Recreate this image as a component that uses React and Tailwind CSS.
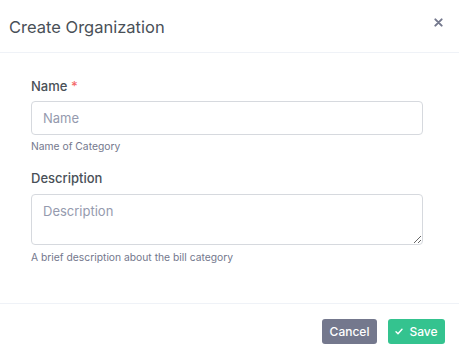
import React from "react";

const CloseIcon = () => (
  <svg width="9" height="9" viewBox="0 0 10 10" fill="none">
    <path d="M1.5 1.5l7 7M8.5 1.5l-7 7" stroke="#74788d" strokeWidth="2.2" strokeLinecap="round" />
  </svg>
);

const CheckIcon = () => (
  <svg width="8" height="7" viewBox="0 0 8 7" fill="none">
    <path d="M1 3.8l2 2L7 1.2" stroke="#ffffff" strokeWidth="1.4" strokeLinecap="round" strokeLinejoin="round" />
  </svg>
);

const App = () => {
  return (
    <div
      className="w-[459px] h-[358px] bg-white flex flex-col overflow-hidden"
      style={{ fontFamily: "Inter, 'Noto Sans', sans-serif" }}
    >
      {/* header */}
      <div className="h-[53px] flex items-center justify-between pl-[9px] pr-[16px] border-b border-[#eff2f7] shrink-0">
        <h5 className="text-[16.5px] text-[#495057] font-normal leading-none mt-[2px]">Create Organization</h5>
        <button className="flex items-center justify-center w-[10px] h-[10px] mt-[-7px]">
          <CloseIcon />
        </button>
      </div>

      {/* body */}
      <div className="h-[250px] pl-[31px] pr-[36px] pt-[23px] shrink-0">
        <label className="block text-[13px] leading-[20px] font-medium text-[#495057] mb-[5px]">
          Name <span className="text-[#f46a6a]">*</span>
        </label>
        <input
          placeholder="Name"
          className="block w-full h-[34px] px-[11px] text-[13px] border border-[#d6d9de] rounded-[4px] placeholder:text-[#959aae] outline-none"
        />
        <p className="text-[10.3px] leading-[16px] text-[#74788d] mt-[3px]">Name of Category</p>

        <label className="block text-[13px] leading-[20px] font-medium text-[#495057] mt-[14px] mb-[6px]">
          Description
        </label>
        <textarea
          placeholder="Description"
          className="block w-full h-[51px] px-[11px] py-[7px] text-[13px] border border-[#d6d9de] rounded-[4px] placeholder:text-[#959aae] outline-none resize-y"
        />
        <p className="text-[10.3px] leading-[16px] text-[#74788d] mt-[4px]">A brief description about the bill category</p>
      </div>

      {/* footer */}
      <div className="flex-1 border-t border-[#eff2f7] flex justify-end items-start gap-[11px] pt-[15px] pr-[14px]">
        <button className="h-[25px] w-[55px] rounded-[3px] bg-[#74788d] text-white text-[12px] font-medium">
          Cancel
        </button>
        <button className="h-[25px] w-[57px] rounded-[3px] bg-[#34c38f] text-white text-[12px] font-medium flex items-center justify-center gap-[6px]">
          <CheckIcon />
          Save
        </button>
      </div>
    </div>
  );
};

export default App;
